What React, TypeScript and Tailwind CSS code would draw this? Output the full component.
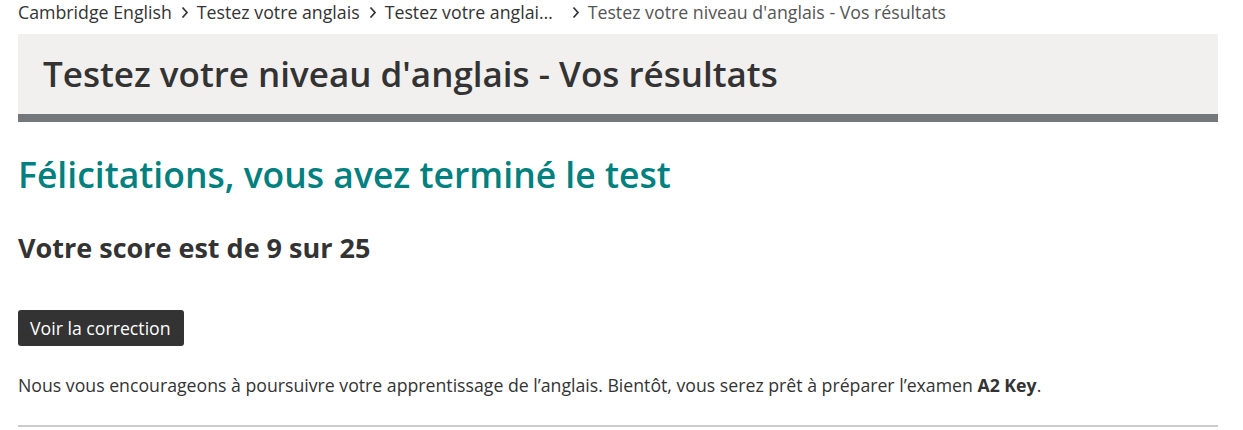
import React from "react";

function Chevron() {
  return (
    <svg width="8" height="12" viewBox="0 0 8 12" className="shrink-0 ml-[9px] mr-[8px]" aria-hidden="true">
      <polyline points="1.5,1.5 6,6.5 1.5,11.5" fill="none" stroke="#333333" strokeWidth="1.7" />
    </svg>
  );
}

export default function App() {
  return (
    <div className="min-h-[430px] bg-white px-[18px] text-[#333333] font-['Open_Sans',sans-serif]">
      <nav className="flex h-6 items-center text-[17.75px] leading-6 whitespace-nowrap">
        <span>Cambridge English</span>
        <Chevron />
        <span>Testez votre anglais</span>
        <Chevron />
        <span className="block w-[178px]">Testez votre anglai…</span>
        <Chevron />
        <span className="text-[#555555]">Testez votre niveau d'anglais - Vos résultats</span>
      </nav>

      <div className="mt-[10px] w-[1200px] border-b-[8px] border-[#75787b] bg-[#f1f0ef]">
        <h1 className="flex h-[80px] items-center px-[25px] text-[35px] font-semibold leading-[44px] text-[#333333]">
          Testez votre niveau d'anglais - Vos résultats
        </h1>
      </div>

      <h2 className="mt-[30px] text-[35.5px] font-semibold leading-[44px] text-[#00807e]">
        Félicitations, vous avez terminé le test
      </h2>

      <h3 className="mt-[34px] text-[27px] font-bold leading-[36px] text-[#333333]">
        Votre score est de 9 sur 25
      </h3>

      <button className="mt-[44px] flex h-[36px] w-[166px] items-center rounded-[3px] bg-[#333333] px-[12px] text-[17.7px] leading-6 text-white">
        Voir la correction
      </button>

      <p className="mt-[27px] text-[17.7px] leading-6 text-[#333333]">
        Nous vous encourageons à poursuivre votre apprentissage de l’anglais. Bientôt, vous serez prêt à préparer l’examen{" "}
        <strong className="font-bold">A2 Key</strong>.
      </p>

      <div className="mt-[28px] h-[2px] w-[1200px] bg-[#cccccc]" />
    </div>
  );
}
